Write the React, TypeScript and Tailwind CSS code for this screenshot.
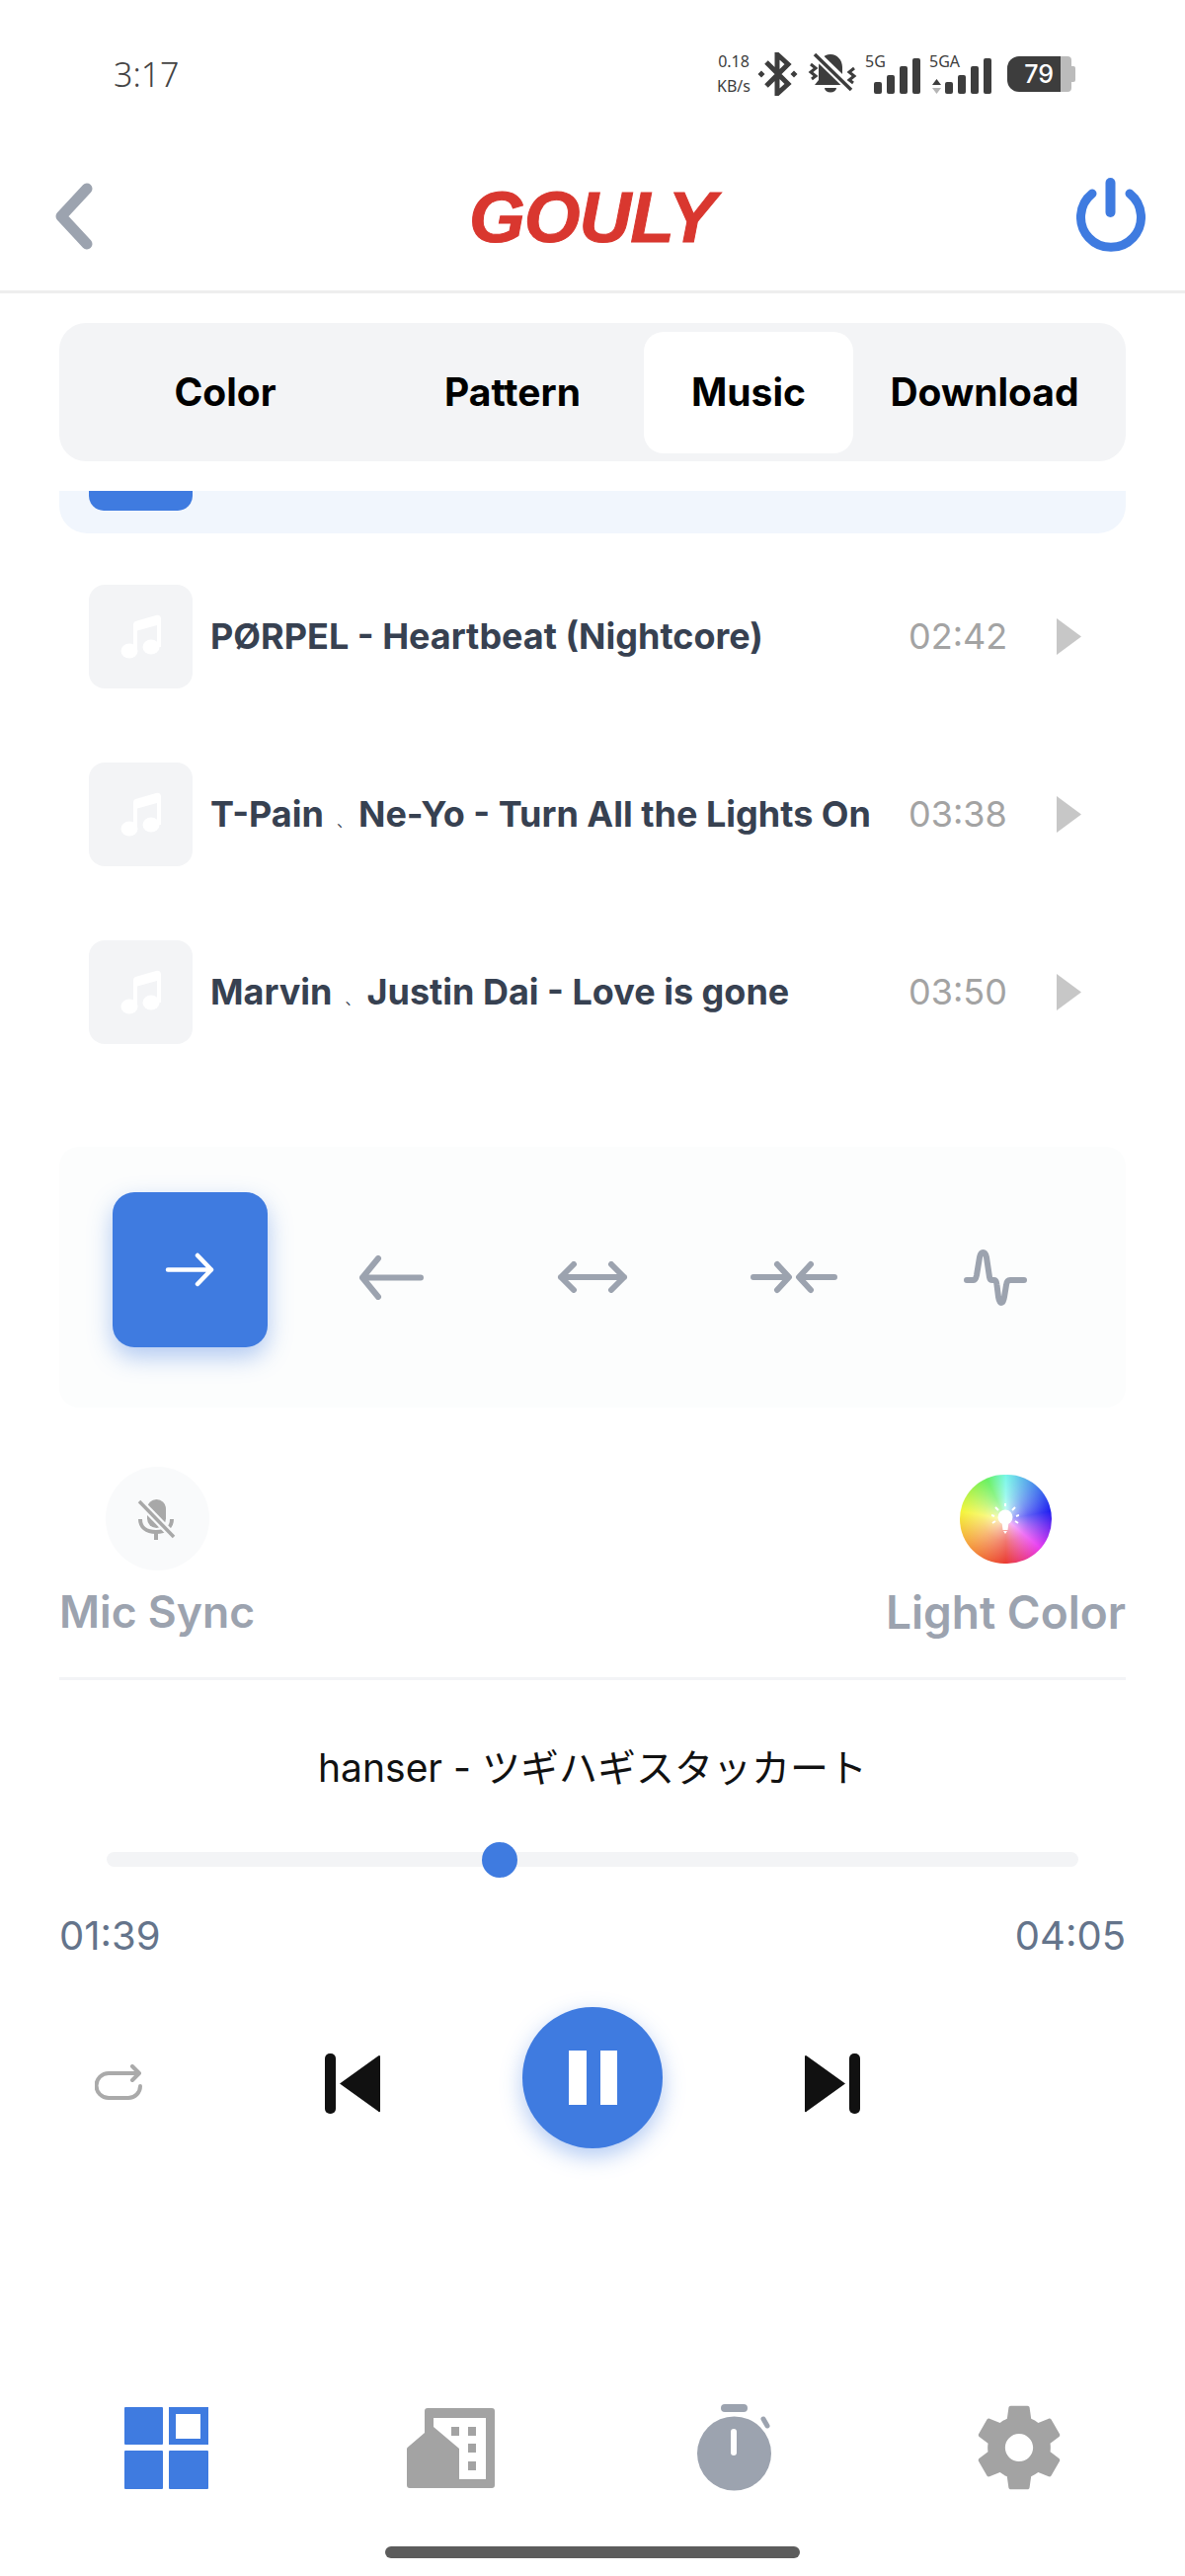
import React from 'react';

const songs = [
  { artists: ['PØRPEL'], name: 'Heartbeat (Nightcore)', time: '02:42' },
  { artists: ['T-Pain', 'Ne-Yo'], name: 'Turn All the Lights On', time: '03:38' },
  { artists: ['Marvin', 'Justin Dai'], name: 'Love is gone', time: '03:50' },
];

function SignalBars() {
  return (
    <div className="flex items-end gap-[5px]">
      <div className="h-[12px] w-[8px] rounded-[2px] bg-[#3d3d3d]" />
      <div className="h-[19px] w-[8px] rounded-[2px] bg-[#3d3d3d]" />
      <div className="h-[28px] w-[8px] rounded-[2px] bg-[#3d3d3d]" />
      <div className="h-[36px] w-[8px] rounded-[2px] bg-[#3d3d3d]" />
    </div>
  );
}

function StatusBar() {
  return (
    <div className="flex h-[150px] items-center pl-[115px] pr-[111px]">
      <span className="text-[34px] leading-none text-[#444] font-['Noto_Sans',sans-serif] font-light">3:17</span>
      <div className="ml-auto flex items-center text-[#3d3d3d] font-['Noto_Sans',sans-serif]">
        <div className="flex h-[40px] w-[38px] flex-col justify-between text-center text-[16px] leading-[15px]">
          <span>0.18</span>
          <span>KB/s</span>
        </div>
        <svg className="ml-[5px]" width="41" height="44" viewBox="0 0 41 44" fill="none" stroke="#3d3d3d" strokeWidth="5">
          <path d="M9 10 31 32 20 42V2L31 12 9 34" />
          <path d="M4 18.500 7.500 22 4 25.500 .5 22Z M37 18.500 40.500 22 37 25.500 33.500 22Z" fill="#3d3d3d" stroke="none" />
        </svg>
        <svg className="ml-[10px]" width="50" height="42" viewBox="0 0 50 42" fill="none">
          <path d="M23 1c-7 0-12 6-12 13v13l-4 5h32l-4-5V14C35 7 30 1 23 1z" fill="#3d3d3d" />
          <path d="M17 35h12a6 4.500 0 0 1-12 0z" fill="#3d3d3d" />
          <path d="M7 0 44 36" stroke="#fff" strokeWidth="9" />
          <path d="M7 1 44 37" stroke="#3d3d3d" strokeWidth="3.500" />
          <path d="M3 11l5 4-5 4 5 4-4 3" stroke="#3d3d3d" strokeWidth="3" />
          <path d="M47 15l-5 4 5 4-5 4 4 3" stroke="#3d3d3d" strokeWidth="3" />
        </svg>
        <div className="relative ml-[8px] h-[40px] w-[56px]">
          <span className="absolute left-0 top-0 text-[16px] leading-[14px]">5G</span>
          <div className="absolute bottom-0 right-0">
            <SignalBars />
          </div>
        </div>
        <div className="relative ml-[9px] h-[40px] w-[63px]">
          <span className="absolute left-0 top-0 text-[16px] leading-[14px]">5GA</span>
          <svg className="absolute bottom-0 left-[3px]" width="9" height="15" viewBox="0 0 9 15">
            <path d="M4.500 0 9 6H0z" fill="#3d3d3d" />
            <path d="M4.500 15 9 9H0z" fill="#b5b5b5" />
          </svg>
          <div className="absolute bottom-0 right-0">
            <SignalBars />
          </div>
        </div>
        <div className="ml-[16px] flex items-center font-['Inter',sans-serif]">
          <div className="flex h-[36px] w-[54px] items-center justify-end rounded-l-[12px] bg-[#3d3d3d] pr-[7px] text-[25px] font-medium leading-none text-white">
            79
          </div>
          <div className="h-[36px] w-[11px] rounded-r-[4px] bg-[#bbbbbb]" />
          <div className="h-[16px] w-[4px] rounded-r-[2px] bg-[#bbbbbb]" />
        </div>
      </div>
    </div>
  );
}

function Header() {
  return (
    <div className="flex h-[147px] items-center justify-between border-b-[3px] border-[#eeeeee] pb-[6px] pl-[55px] pr-[40px]">
      <div className="w-[104px]">
        <svg width="41" height="68" viewBox="0 0 41 68" fill="none" stroke="#9ca3af" strokeWidth="11" strokeLinecap="round" strokeLinejoin="round">
          <path d="M33 6 7 34 33 62" />
        </svg>
      </div>
      <span className="text-[73px] font-bold italic leading-none tracking-[-1px] text-[#d9372f] [-webkit-text-stroke:1px_#d9372f] font-['Liberation_Sans',sans-serif]">
        GOULY
      </span>
      <div className="flex w-[120px] justify-end">
        <svg width="70" height="75" viewBox="0 0 70 75" fill="none" stroke="#3f7be0" className="-mt-[4px]">
          <path d="M16 16A30.500 30.500 0 1 0 54 16" strokeWidth="9" strokeLinecap="round" />
          <path d="M34.500 5V35" strokeWidth="10" strokeLinecap="round" />
        </svg>
      </div>
    </div>
  );
}

function Tabs() {
  return (
    <div className="mx-[60px] mt-[30px] flex h-[140px] items-center rounded-[27px] bg-[#f3f4f6] text-[39px] font-bold text-black">
      <div className="w-[336px] text-center">Color</div>
      <div className="w-[246px] text-center">Pattern</div>
      <div className="ml-[10px] flex h-[123px] w-[212px] items-center justify-center rounded-[20px] bg-white">Music</div>
      <div className="w-[266px] text-center">Download</div>
    </div>
  );
}

function NoteIcon() {
  return (
    <svg width="41" height="45" viewBox="0 0 41 45" fill="#fff">
      <ellipse cx="9" cy="37" rx="8.500" ry="7.500" />
      <ellipse cx="31" cy="33" rx="8.500" ry="7.500" />
      <path d="M13 38V10.500c0-2 1-3.200 3-3.800L36 1c3-.8 5 .5 5 3.500V33h-4V11L17 16.500V38z" />
    </svg>
  );
}

function SongRow({ artists, name, time }: { artists: string[]; name: string; time: string }) {
  return (
    <div className="flex h-[105px] items-center pl-[90px]">
      <div className="flex h-[105px] w-[105px] items-center justify-center rounded-[16px] bg-[#f3f4f6]">
        <NoteIcon />
      </div>
      <div className="ml-[18px] w-[707px] whitespace-nowrap pb-[2px] text-[36px] font-bold text-[#374151]">
        {artists.map((artist, i) => (
          <React.Fragment key={artist}>
            {i > 0 && <span className="inline-block w-[35px] pl-[13px] text-[15px] font-normal">、</span>}
            {artist}
          </React.Fragment>
        ))}
        {' - '}
        {name}
      </div>
      <div className="pb-[2px] text-[36px] text-[#a3a3a3]">{time}</div>
      <svg className="ml-[50px]" width="25" height="37" viewBox="0 0 25 37" fill="#c7c7c7">
        <path d="M0 0 25 18.500 0 37Z" />
      </svg>
    </div>
  );
}

function EffectModes() {
  return (
    <div className="mx-[60px] mt-[104px] grid h-[264px] grid-cols-5 items-center justify-items-center rounded-[20px] bg-[#fcfdfd] px-[30px]">
      <div className="-mt-[16px] flex h-[157px] w-[157px] items-center justify-center rounded-[22px] bg-[#3f7be0] shadow-[0_10px_24px_rgba(63,123,224,0.4)]">
        <svg width="50" height="35" viewBox="0 0 50 35" fill="none" stroke="#fff" strokeWidth="4.500" strokeLinecap="round" strokeLinejoin="round">
          <path d="M3 17.500H47M33 3l14 14.500L33 32" />
        </svg>
      </div>
      <svg width="66" height="45" viewBox="0 0 66 45" fill="none" stroke="#9ca3af" strokeWidth="6" strokeLinecap="round" strokeLinejoin="round">
        <path d="M63 22.500H4M20 3 4 22.500 20 42" />
      </svg>
      <svg width="72" height="32" viewBox="0 0 72 32" fill="none" stroke="#9ca3af" strokeWidth="6" strokeLinecap="round" strokeLinejoin="round">
        <path d="M4 16H68M17 3 4 16l13 13M55 3l13 13-13 13" />
      </svg>
      <svg width="88" height="34" viewBox="0 0 88 34" fill="none" stroke="#9ca3af" strokeWidth="6" strokeLinecap="round" strokeLinejoin="round">
        <path d="M3 17H38M27 4l12 13-12 13M85 17H50M61 4 49 17l12 13" />
      </svg>
      <svg width="64" height="60" viewBox="0 0 64 60" fill="none" stroke="#9ca3af" strokeWidth="6" strokeLinecap="round" strokeLinejoin="round">
        <path d="M3 33H10Q12 33 13 28L16 10Q17 5 19.500 5 22 5 23 10L26 30Q26.500 33 29 33H31Q33 33 33.500 38L35 50Q36 56 38 56 40 56 41 50L43 38Q43.500 33 47 33H61" />
      </svg>
    </div>
  );
}

function MicOffIcon() {
  return (
    <svg width="40" height="42" viewBox="0 0 40 42" fill="none">
      <rect x="10" y="1" width="19" height="29" rx="9.500" fill="#a8a8a8" />
      <path d="M3 21c0 8 6 13 16 13s16-5 16-13" stroke="#a8a8a8" strokeWidth="4" />
      <path d="M19 34v8" stroke="#a8a8a8" strokeWidth="4" />
      <path d="M2 3 37 39" stroke="#f9fafb" strokeWidth="8" />
      <path d="M2 3 37 39" stroke="#a8a8a8" strokeWidth="3.500" />
    </svg>
  );
}

function SyncRow() {
  return (
    <div className="mx-[60px] mt-[60px] flex justify-between font-semibold leading-[56px] text-[#9ca3af]">
      <div className="flex flex-col items-center">
        <div className="flex h-[105px] w-[105px] items-center justify-center rounded-full bg-[#f9fafb]">
          <MicOffIcon />
        </div>
        <span className="mt-[14px] text-[44.5px]">Mic Sync</span>
      </div>
      <div className="flex flex-col items-center">
        <div className="flex h-[105px] items-center">
          <div className="flex h-[90px] w-[93px] items-center justify-center rounded-full bg-[radial-gradient(circle,rgba(255,255,255,0.75)_0%,rgba(255,255,255,0.3)_35%,rgba(255,255,255,0)_70%),conic-gradient(#77f7e8_0deg,#2020f0_80deg,#e93cf0_130deg,#ea3a30_180deg,#f5a040_235deg,#f5f53c_280deg,#66f060_335deg,#77f7e8_360deg)]">
            <svg width="28" height="32" viewBox="0 0 28 32" fill="#fff">
              <circle cx="14" cy="14" r="7.500" />
              <path d="M10.500 19h7l-1 8h-5z" />
              <path d="M12 28h4l-2 3z" />
              <path d="M14 0v3M4 4l3 3M24 4l-3 3M0 12l3 1M28 12l-3 1M1 20l3-2M27 20l-3-2" stroke="#fff" strokeWidth="2" />
            </svg>
          </div>
        </div>
        <span className="mt-[14px] text-[46px]">Light Color</span>
      </div>
    </div>
  );
}

function Player() {
  return (
    <>
      <div className="mx-[60px] mt-[38px] h-[3px] bg-[#f3f4f6]" />
      <div className="mt-[64px] h-[50px] text-center text-[39px] leading-[50px] text-[#111]">hanser - ツギハギスタッカート</div>
      <div className="relative mx-[108px] mt-[60px] h-[15px] rounded-full bg-[#f3f4f6]">
        <div className="absolute left-[380px] top-[-10px] h-[36px] w-[36px] rounded-full bg-[#3f7be0]" />
      </div>
      <div className="mx-[60px] mt-[48px] flex h-[44px] justify-between text-[40px] leading-[44px] text-[#64748b]">
        <span>01:39</span>
        <span>04:05</span>
      </div>
      <div className="mt-[50px] flex items-center pl-[96px]">
        <svg className="mt-[10px]" width="49" height="37" viewBox="0 0 49 37" fill="none" stroke="#aaaaaa" strokeWidth="4" strokeLinecap="round" strokeLinejoin="round">
          <path d="M38 2l7 7-7 7M44 9H14A12 12 0 0 0 14 34H34A12 12 0 0 0 46 22" />
        </svg>
        <svg className="ml-[184px] mt-[12px]" width="56" height="61" viewBox="0 0 56 61" fill="#111">
          <rect width="11" height="61" rx="5" />
          <path d="M55 2a1 1 0 0 1 1 1V58a1 1 0 0 1-2 .5L15 30.500 54 2.500z" />
        </svg>
        <div className="ml-[144px] flex h-[143px] w-[142px] items-center justify-center gap-[14px] rounded-full bg-[#3f7be0] shadow-[0_8px_22px_rgba(63,123,224,0.4)]">
          <div className="h-[55px] w-[18px] bg-white" />
          <div className="h-[55px] w-[17px] bg-white" />
        </div>
        <svg className="ml-[144px] mt-[12px]" width="56" height="61" viewBox="0 0 56 61" fill="#111">
          <rect x="45" width="11" height="61" rx="5" />
          <path d="M1 2a1 1 0 0 0-1 1V58a1 1 0 0 0 2 .5L41 30.500 2 2.500z" />
        </svg>
      </div>
    </>
  );
}

function BottomNav() {
  return (
    <div className="mt-[259px] grid h-[88px] grid-cols-4 items-center justify-items-center px-[24px]">
      <svg width="85" height="83" viewBox="0 0 85 83" fill="#3f7be0">
        <rect width="39" height="38" rx="1" />
        <path d="M45 0H85V38H45ZM52 7V32H77V7Z" fillRule="evenodd" />
        <rect y="44" width="39" height="39" rx="1" />
        <rect x="45" y="44" width="40" height="39" rx="1" />
      </svg>
      <svg width="89" height="81" viewBox="0 0 89 81" fill="#a3a3a3">
        <path d="M21 0H86a3 3 0 0 1 3 3V78a3 3 0 0 1-3 3H3a3 3 0 0 1-3-3V42a3 3 0 0 1 .5-2L18 25V3a3 3 0 0 1 3-3zM27 10V19L53 41V72H80V10z" fillRule="evenodd" />
        <rect x="45" y="19" width="8" height="9" />
        <rect x="62" y="19" width="8" height="9" />
        <rect x="62" y="36" width="8" height="9" />
        <rect x="62" y="54" width="8" height="9" />
      </svg>
      <svg width="76" height="88" viewBox="0 0 76 88" fill="#9ca3af">
        <rect x="24" width="27" height="8" rx="4" />
        <path d="M67 15 71 22" stroke="#9ca3af" strokeWidth="5" strokeLinecap="round" />
        <circle cx="37.500" cy="50" r="37.500" />
        <rect x="34" y="25" width="6" height="27" rx="3" fill="#fff" />
      </svg>
      <svg width="84" height="88" viewBox="2.500 2 19 20" fill="#a3a3a3" preserveAspectRatio="none">
        <path d="M19.140 12.940c.04-.3.06-.61.06-.94 0-.32-.02-.64-.07-.94l2.030-1.580c.18-.14.23-.41.12-.61l-1.920-3.320c-.12-.22-.37-.29-.59-.22l-2.390.96c-.5-.38-1.030-.7-1.620-.94l-.36-2.540c-.04-.24-.24-.41-.48-.41h-3.840c-.24 0-.43.17-.47.41l-.36 2.540c-.59.24-1.130.57-1.620.94l-2.390-.96c-.22-.08-.47 0-.59.22L2.740 8.870c-.12.21-.08.47.12.61l2.030 1.580c-.05.3-.09.63-.09.94s.02.64.07.94l-2.030 1.580c-.18.14-.23.41-.12.61l1.920 3.320c.12.22.37.29.59.22l2.390-.96c.5.38 1.030.7 1.620.94l.36 2.540c.05.24.24.41.48.41h3.840c.24 0 .44-.17.47-.41l.36-2.540c.59-.24 1.130-.56 1.620-.94l2.390.96c.22.08.47 0 .59-.22l1.920-3.320c.12-.22.07-.47-.12-.61l-2.010-1.580zM12 15.200c-1.760 0-3.200-1.440-3.200-3.200s1.440-3.200 3.200-3.200 3.200 1.440 3.200 3.200-1.440 3.200-3.200 3.200z" />
      </svg>
    </div>
  );
}

export default function App() {
  return (
    <div className="flex h-[2608px] w-[1200px] flex-col overflow-hidden bg-white font-['Inter','Noto_Sans_CJK_JP',sans-serif]">
      <StatusBar />
      <Header />
      <Tabs />

      {/* the list is scrolled, only the bottom of the previous card is visible */}
      <div className="mx-[60px] mt-[30px] h-[43px] rounded-b-[28px] bg-[#f1f6fd] pl-[30px]">
        <div className="h-[20px] w-[105px] rounded-b-[15px] bg-[#3f7be0]" />
      </div>

      <div className="mt-[52px] flex flex-col gap-[75px]">
        {songs.map(song => (
          <SongRow key={song.name} artists={song.artists} name={song.name} time={song.time} />
        ))}
      </div>

      <EffectModes />
      <SyncRow />
      <Player />
      <BottomNav />

      <div className="mx-auto mt-[56px] h-[12px] w-[420px] rounded-full bg-[#5c5c5c]" />
    </div>
  );
}
